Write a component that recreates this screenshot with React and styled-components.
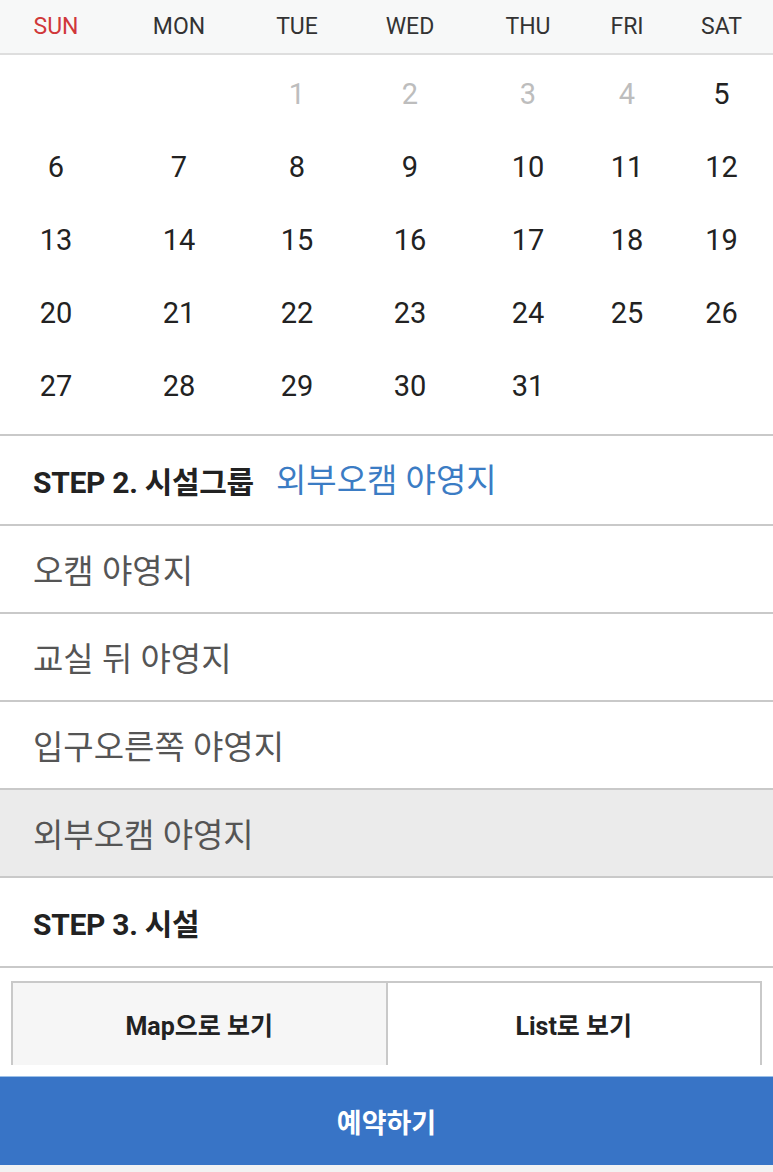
import styled, { createGlobalStyle } from "styled-components";

const GlobalStyle = createGlobalStyle`
    html, body {
        margin: 0;
        padding: 0;
        background: #ffffff;
        overflow: hidden;
    }
    body {
        font-family: Roboto, "Noto Sans CJK KR", sans-serif;
    }
`;

const weekdays = ['SUN', 'MON', 'TUE', 'WED', 'THU', 'FRI', 'SAT'];

// 이전달 날짜는 muted
const dias = [
    null, null, { n: 1, muted: true }, { n: 2, muted: true }, { n: 3, muted: true }, { n: 4, muted: true }, { n: 5 },
    ...Array.from({ length: 26 }, (_, i) => ({ n: i + 6 })),
];

const grupos = [
    { id: 1, nome: '오캠 야영지' },
    { id: 2, nome: '교실 뒤 야영지' },
    { id: 3, nome: '입구오른쪽 야영지' },
    { id: 4, nome: '외부오캠 야영지', selected: true },
];

const colunas = '112px 134px 102px 124px 112px 86px 1fr';

const Page = styled.div`
    width: 773px;
    height: 1172px;
    display: flex;
    flex-direction: column;
    background: #fff;
`;

const WeekHeader = styled.div`
    display: grid;
    grid-template-columns: ${colunas};
    height: 53px;
    align-items: center;
    background: #f7f8f8;
    border-bottom: 2px solid #dedede;
`;

const WeekDay = styled.div`
    text-align: center;
    font-size: 23px;
    color: ${({ $sunday }) => ($sunday ? '#d0383a' : '#333')};
`;

const DateGrid = styled.div`
    display: grid;
    grid-template-columns: ${colunas};
    grid-auto-rows: 73px;
    align-items: center;
    padding: 2px 0 12px;
    border-bottom: 2px solid #c9c9c9;
`;

const DateCell = styled.div`
    text-align: center;
    font-size: 29px;
    color: ${({ $muted }) => ($muted ? '#bdbdbd' : '#222')};
`;

const StepRow = styled.div`
    height: 88px;
    display: flex;
    align-items: center;
    gap: 22px;
    padding-left: 33px;
    border-bottom: 2px solid #c9c9c9;
`;

const StepTitle = styled.span`
    font-size: 30px;
    font-weight: 700;
    color: #222;
    letter-spacing: -0.3px;
`;

const StepValue = styled.span`
    font-size: 33px;
    color: #3b7cc4;
    margin-top: -4px;
`;

const GroupItem = styled.div`
    height: 86px;
    display: flex;
    align-items: center;
    padding-left: 33px;
    font-size: 33px;
    color: #555;
    background: ${({ $selected }) => ($selected ? '#ebebeb' : '#fff')};
    border-bottom: 2px solid #c9c9c9;
`;

const TabArea = styled.div`
    padding: 13px 11px 11px;
    display: flex;
`;

const Tab = styled.div`
    flex: 1;
    height: 82px;
    display: flex;
    align-items: center;
    justify-content: center;
    font-size: 25px;
    font-weight: 700;
    color: #222;
    background: ${({ $active }) => ($active ? '#f6f6f6' : '#fff')};
    border: 2px solid #c9c9c9;
    border-bottom: none;
    & + & {
        border-left: none;
    }
`;

const ReserveButton = styled.div`
    height: 88px;
    display: flex;
    align-items: center;
    justify-content: center;
    background: #3874c6;
    border-top: 1px solid #9cc0e8;
    color: #fff;
    font-size: 27px;
    font-weight: 700;
`;

const BottomStrip = styled.div`
    flex: 1;
    background: #f2f2f2;
`;

export default function App() {
    return (
        <Page>
            <GlobalStyle />
            <WeekHeader>
                {weekdays.map((d, i) => (
                    <WeekDay key={d} $sunday={i === 0}>{d}</WeekDay>
                ))}
            </WeekHeader>
            <DateGrid>
                {dias.map((d, i) => (
                    <DateCell key={i} $muted={d && d.muted}>{d ? d.n : ''}</DateCell>
                ))}
            </DateGrid>
            <StepRow>
                <StepTitle>STEP 2. 시설그룹</StepTitle>
                <StepValue>외부오캠 야영지</StepValue>
            </StepRow>
            {grupos.map((g) => (
                <GroupItem key={g.id} $selected={g.selected}>{g.nome}</GroupItem>
            ))}
            <StepRow>
                <StepTitle>STEP 3. 시설</StepTitle>
            </StepRow>
            <TabArea>
                <Tab $active>Map으로 보기</Tab>
                <Tab>List로 보기</Tab>
            </TabArea>
            <ReserveButton>예약하기</ReserveButton>
            <BottomStrip />
        </Page>
    );
}
